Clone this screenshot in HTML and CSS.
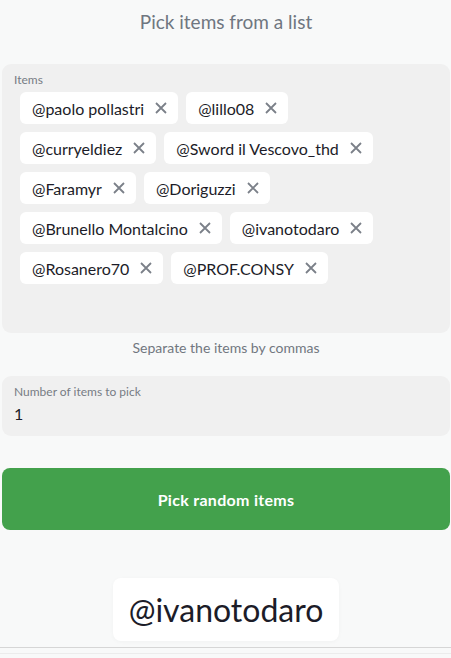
FILE: index.html
```html
<!DOCTYPE html>
<html lang="en">
<head>
<meta charset="utf-8">
<title>Pick items from a list</title>
<link rel="stylesheet" href="styles.css">
</head>
<body>
<main class="page">
  <h1 class="title">Pick items from a list</h1>

  <section class="field items-field">
    <label class="field-label">Items</label>
    <div class="chips">
      <span class="chip">@paolo pollastri<span class="x"><svg viewBox="0 0 14 14"><path d="M2 2L12 12M12 2L2 12"/></svg></span></span>
      <span class="chip">@lillo08<span class="x"><svg viewBox="0 0 14 14"><path d="M2 2L12 12M12 2L2 12"/></svg></span></span>
      <span class="chip">@curryeldiez<span class="x"><svg viewBox="0 0 14 14"><path d="M2 2L12 12M12 2L2 12"/></svg></span></span>
      <span class="chip">@Sword il Vescovo_thd<span class="x"><svg viewBox="0 0 14 14"><path d="M2 2L12 12M12 2L2 12"/></svg></span></span>
      <span class="chip">@Faramyr<span class="x"><svg viewBox="0 0 14 14"><path d="M2 2L12 12M12 2L2 12"/></svg></span></span>
      <span class="chip">@Doriguzzi<span class="x"><svg viewBox="0 0 14 14"><path d="M2 2L12 12M12 2L2 12"/></svg></span></span>
      <span class="chip">@Brunello Montalcino<span class="x"><svg viewBox="0 0 14 14"><path d="M2 2L12 12M12 2L2 12"/></svg></span></span>
      <span class="chip">@ivanotodaro<span class="x"><svg viewBox="0 0 14 14"><path d="M2 2L12 12M12 2L2 12"/></svg></span></span>
      <span class="chip">@Rosanero70<span class="x"><svg viewBox="0 0 14 14"><path d="M2 2L12 12M12 2L2 12"/></svg></span></span>
      <span class="chip">@PROF.CONSY<span class="x"><svg viewBox="0 0 14 14"><path d="M2 2L12 12M12 2L2 12"/></svg></span></span>
    </div>
  </section>
  <p class="hint">Separate the items by commas</p>

  <section class="field number-field">
    <label class="field-label">Number of items to pick</label>
    <div class="value">1</div>
  </section>

  <button class="pick-btn">Pick random items</button>

  <div class="result-wrap">
    <div class="result">@ivanotodaro</div>
  </div>

  <div class="footer-lines"></div>
</main>
</body>
</html>
```

FILE: styles.css
```css
* { box-sizing: border-box; }
html, body { margin: 0; padding: 0; }
body {
  background: #f8f9f9;
  font-family: "Lato", "Noto Sans", sans-serif;
  color: #1c1c28;
}
.page {
  padding: 0 1px 0 2px;
}
.title {
  margin: 0;
  padding-top: 10px;
  height: 64px;
  text-align: center;
  font-size: 19px;
  font-weight: 400;
  color: #6f7680;
  line-height: 24px;
}
.field {
  background: #f0f0f0;
  border-radius: 9px;
}
.field-label {
  display: block;
  font-size: 12px;
  color: #777c84;
  line-height: 14px;
}
.items-field {
  height: 269px;
  padding: 9px 12px 0 12px;
}
.chips {
  display: flex;
  flex-wrap: wrap;
  gap: 8px;
  padding: 5px 30px 0 6px;
}
.chip {
  display: inline-flex;
  align-items: center;
  height: 32px;
  padding: 0 10px 0 12px;
  background: #ffffff;
  border-radius: 6px;
  font-size: 16px;
  color: #1c1c28;
  white-space: nowrap;
}
.x {
  display: inline-flex;
  margin-left: 10px;
  width: 14px;
  height: 14px;
}
.x svg {
  width: 14px;
  height: 14px;
  stroke: #7b8089;
  stroke-width: 1.8;
  fill: none;
}
.hint {
  margin: 0;
  height: 43px;
  padding-top: 6px;
  text-align: center;
  font-size: 14px;
  line-height: 18px;
  color: #71777f;
}
.number-field {
  height: 60px;
  padding: 9px 12px 0 12px;
}
.value {
  margin-top: 5px;
  font-size: 16px;
  line-height: 20px;
  color: #1c1c28;
}
.pick-btn {
  display: block;
  width: 100%;
  margin-top: 32px;
  height: 62px;
  border: none;
  border-radius: 8px;
  background: #43a14c;
  color: #ffffff;
  font-family: inherit;
  font-size: 16px;
  letter-spacing: 0.3px;
  font-weight: 700;
}
.result-wrap {
  display: flex;
  justify-content: center;
  padding-top: 48px;
}
.result {
  background: #ffffff;
  border-radius: 8px;
  padding: 0 16px;
  height: 63px;
  line-height: 63px;
  font-size: 32px;
  color: #1c1c28;
  box-shadow: 0 1px 4px rgba(0,0,0,0.03);
}
.footer-lines {
  margin: 6px -1px 0 -2px;
  height: 7px;
  border-top: 1px solid #d6d6d6;
  border-bottom: 1px solid #ececec;
}
```
